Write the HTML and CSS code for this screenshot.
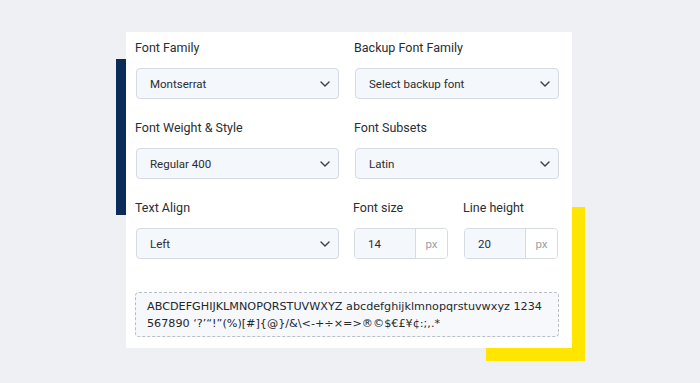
FILE: index.html
```html
<!DOCTYPE html>
<html>
<head>
<meta charset="utf-8">
<link rel="stylesheet" href="styles.css">
</head>
<body>
<div class="stage">
  <div class="deco-navy"></div>
  <div class="deco-yellow"></div>
  <div class="card">
    <div class="row">
      <div class="field">
        <div class="label">Font Family</div>
        <div class="select"><span>Montserrat</span><svg class="chev" viewBox="0 0 10 6"><path d="M1 1l4 4 4-4"/></svg></div>
      </div>
      <div class="field">
        <div class="label">Backup Font Family</div>
        <div class="select"><span>Select backup font</span><svg class="chev" viewBox="0 0 10 6"><path d="M1 1l4 4 4-4"/></svg></div>
      </div>
    </div>
    <div class="row">
      <div class="field">
        <div class="label">Font Weight &amp; Style</div>
        <div class="select"><span>Regular 400</span><svg class="chev" viewBox="0 0 10 6"><path d="M1 1l4 4 4-4"/></svg></div>
      </div>
      <div class="field">
        <div class="label">Font Subsets</div>
        <div class="select"><span>Latin</span><svg class="chev" viewBox="0 0 10 6"><path d="M1 1l4 4 4-4"/></svg></div>
      </div>
    </div>
    <div class="row">
      <div class="field">
        <div class="label">Text Align</div>
        <div class="select"><span>Left</span><svg class="chev" viewBox="0 0 10 6"><path d="M1 1l4 4 4-4"/></svg></div>
      </div>
      <div class="pair">
        <div class="field">
          <div class="label">Font size</div>
          <div class="num"><span class="val">14</span><span class="unit">px</span></div>
        </div>
        <div class="field">
          <div class="label">Line height</div>
          <div class="num"><span class="val">20</span><span class="unit">px</span></div>
        </div>
      </div>
    </div>
    <div class="preview">ABCDEFGHIJKLMNOPQRSTUVWXYZ abcdefghijklmnopqrstuvwxyz 1234 567890 ‘?’“!”(%)[#]{@}/&amp;\&lt;-+÷×=&gt;®©$€£¥¢:;,.*</div>
  </div>
</div>
</body>
</html>
```
FILE: styles.css
```css
* { box-sizing: border-box; }
html, body { margin: 0; padding: 0; }
body {
  background: #eef0f4;
  width: 700px;
  height: 383px;
  overflow: hidden;
  font-family: Roboto, "Liberation Sans", sans-serif;
  color: #2f3338;
}
.stage {
  position: relative;
  margin: 32px 0 0 126px;
  width: 446px;
  height: 316px;
}
.deco-navy {
  position: absolute;
  left: -10px;
  top: 27px;
  width: 20px;
  height: 156px;
  background: #0b2b58;
}
.deco-yellow {
  position: absolute;
  left: 360px;
  top: 175px;
  width: 99px;
  height: 154px;
  background: #ffe500;
}
.card {
  position: relative;
  width: 446px;
  height: 316px;
  background: #fff;
  padding: 8px 13px 0 10px;
}
.row {
  display: grid;
  grid-template-columns: 203px 204px;
  column-gap: 16px;
  margin-bottom: 21px;
}
.field { display: flex; flex-direction: column; }
.label {
  font-size: 12.5px;
  line-height: 16px;
  color: #2a2e33;
  margin-left: -1px;
  margin-bottom: 12px;
}
.select {
  height: 31px;
  border: 1px solid #d6dbe1;
  border-radius: 4px;
  background: #f4f7fb;
  display: flex;
  align-items: center;
  justify-content: space-between;
  padding: 0 8px 0 13px;
  font-size: 11.5px;
  color: #2a2e33;
}
.chev {
  width: 10px;
  height: 6px;
  fill: none;
  stroke: #3a3f45;
  stroke-width: 1.4;
  stroke-linecap: round;
  stroke-linejoin: round;
}
.pair {
  display: grid;
  grid-template-columns: 94px 94px;
  column-gap: 16px;
  margin-left: -1px;
}
.num {
  height: 31px;
  border: 1px solid #d6dbe1;
  border-radius: 4px;
  display: flex;
  overflow: hidden;
  font-size: 11.5px;
}
.num .val {
  width: 61px;
  background: #f4f7fb;
  border-right: 1px solid #d6dbe1;
  display: flex;
  align-items: center;
  padding-left: 13px;
  color: #2a2e33;
}
.num .unit {
  flex: 1;
  display: flex;
  align-items: center;
  justify-content: center;
  color: #9aa0a6;
  background: #fff;
}
.preview {
  margin-top: 33px;
  margin-left: -1px;
  width: 424px;
  height: 45px;
  border: 1px dashed #b9bec4;
  border-radius: 4px;
  background: #f6f8fb;
  padding: 5px 10px 0 11px;
  font-family: "DejaVu Sans", sans-serif;
  font-size: 11.2px;
  line-height: 17px;
  color: #24282d;
}
```
